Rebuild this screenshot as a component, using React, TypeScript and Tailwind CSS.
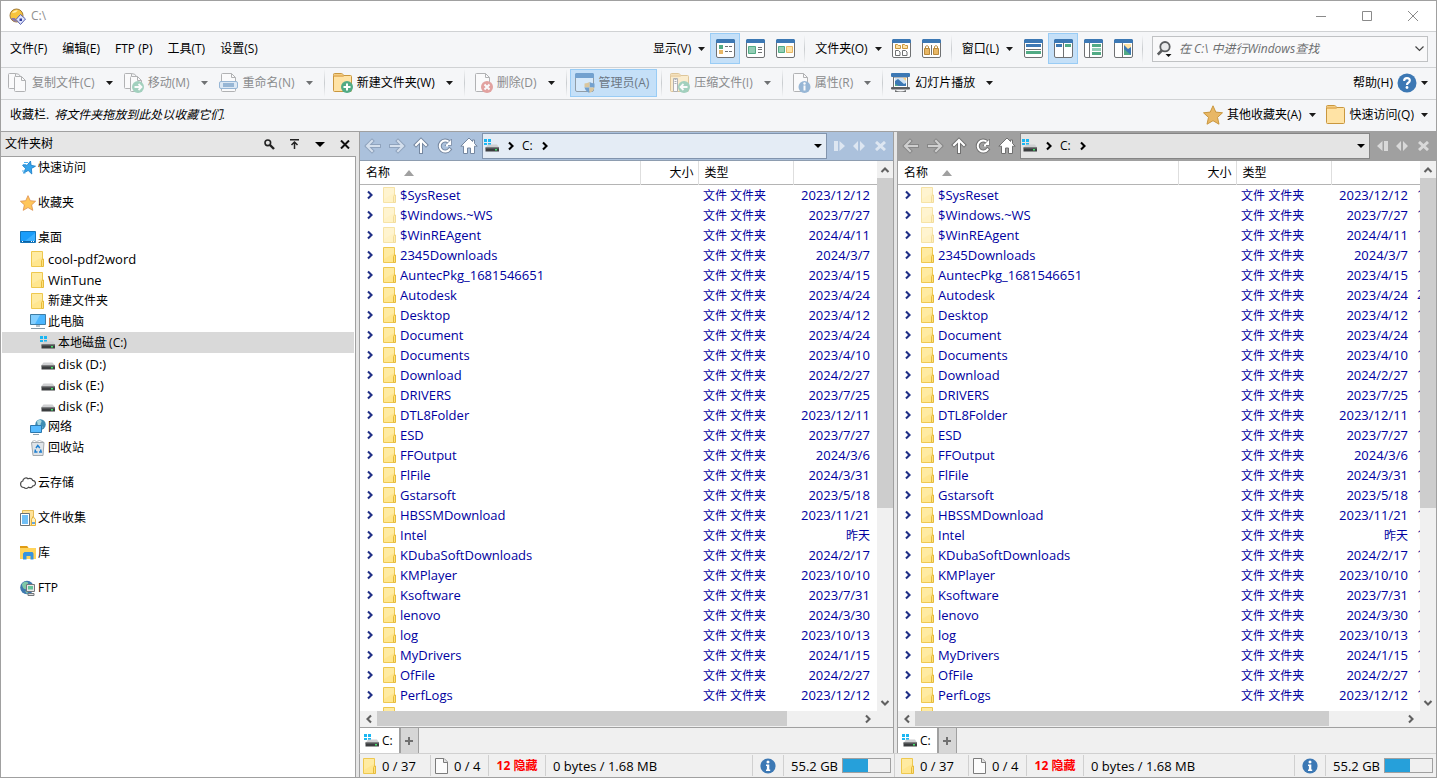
import React from "react";

const GREEN = "#52ab85";
const BLUE = "#3c78b4";
const ORANGE = "#e8b765";

/* ---------- small glyphs ---------- */

function Caret({ faded = false }: { faded?: boolean }) {
  return (
    <svg width="7" height="4" viewBox="0 0 7 4" className={faded ? "text-[#6f7173]" : "text-[#1a1a1a]"}>
      <path d="M0 0h7L3.500 4z" fill="currentColor" />
    </svg>
  );
}

function Chevron({ dir, className }: { dir: "up" | "down" | "left" | "right"; className?: string }) {
  const d = {
    up: "M1.500 7L5 3.500 8.500 7",
    down: "M1.500 3L5 6.500 8.500 3",
    left: "M7 1.500L3.500 5 7 8.500",
    right: "M3 1.500L6.500 5 3 8.500",
  }[dir];
  return (
    <svg width="10" height="10" viewBox="0 0 10 10" className={className}>
      <path d={d} fill="none" stroke="currentColor" strokeWidth="2.100" />
    </svg>
  );
}

/* ---------- tree and list icons ---------- */

function FolderIcon({ faded = false }: { faded?: boolean }) {
  return (
    <svg width="16" height="16" viewBox="0 0 16 16" className={faded ? "opacity-50" : ""}>
      <path d="M1.500.5h11v15h-11z" fill="#ffe68f" stroke="#eec84f" />
      <path d="M2 1h10v5L2 12z" fill="#ffedaa" opacity=".7" />
      <path d="M11.500 15.500v-6l1-1.500h1v7.500z" fill="#ffe17c" stroke="#e6bb3c" />
    </svg>
  );
}

function DriveIcon({ system = false }: { system?: boolean }) {
  return (
    <svg width="16" height="16" viewBox="0 0 16 16">
      {system && <path d="M0 1h3v3H0zM4 1h3v3H4zM0 5h3v2H0zM4 5h3v2H4z" fill="#1bb6f2" />}
      <path d={system ? "M4 6.500h9l2 3H2z" : "M3.500 6.500h9l2.500 3H1z"} fill="#cfd0d2" />
      <path d="M1.500 9.500h13.500v4H1.500z" fill="#3b3d3f" />
      <path d="M1.500 9.500h13.500v1H1.500z" fill="#6b6d6f" />
      <path d="M11 11h2v1.500h-2z" fill="#43e26b" />
    </svg>
  );
}

function StarIcon({ size, fill, stroke }: { size: number; fill: string; stroke: string }) {
  return (
    <svg width={size} height={size} viewBox="0 0 20 20">
      <path d="M10 .8l2.800 6.300 6.700.7-5 4.600 1.500 6.800L10 15.700l-6 3.500 1.500-6.800-5-4.600 6.700-.7z" fill={fill} stroke={stroke} />
    </svg>
  );
}

function QuickAccessIcon() {
  return (
    <svg width="16" height="16" viewBox="0 0 16 16">
      <path d="M10.500 1l.6 4.300 4.400.9-4.100 2.300.4 5.500-3.600-3.500-4.600 2.600 2-4.700-3.100-3 4.700-.2z" fill="#35a4ec" stroke="#1479c4" strokeWidth=".8" />
      <path d="M4 2.500h4M3 4.500h3M2 11h3M3.500 13h2" stroke="#4fb0ee" strokeWidth="1" />
    </svg>
  );
}

function DesktopIcon() {
  return (
    <svg width="16" height="16" viewBox="0 0 16 16">
      <path d="M.5 1.500h15v11H.5z" fill="#1a9dfa" stroke="#1574b8" />
      <path d="M5 11L15 3v8z" fill="#3cb0ff" />
      <path d="M1 11.500h14" stroke="#0c62a4" />
      <path d="M2 11.500h1M11 11.500h1M13 11.500h1" stroke="#fff" />
    </svg>
  );
}

function ComputerIcon() {
  return (
    <svg width="16" height="16" viewBox="0 0 16 16">
      <path d="M.5 .5h15v10H.5z" fill="#4bb6ff" stroke="#3f7da4" />
      <path d="M1 1h9L5 10H1z" fill="#83cfff" />
      <path d="M6 11h4v2H6z" fill="#b5c0c8" />
      <path d="M1 14.500h14" stroke="#8498a5" />
    </svg>
  );
}

function NetworkIcon() {
  return (
    <svg width="16" height="16" viewBox="0 0 16 16">
      <circle cx="10.500" cy="5.500" r="5.200" fill="#3e8db3" />
      <path d="M7 2c2-1.500 4-1 4.500 0s-1 2-1 3.500 2 1 2 2.500-1 2-2 2-3-3-3.500-8z" fill="#a6d6df" />
      <path d="M.5 6.500h11v7H.5z" fill="#56bbff" stroke="#2d78ad" />
      <path d="M3 15.500h6" stroke="#8aa0ae" />
    </svg>
  );
}

function RecycleIcon() {
  return (
    <svg width="16" height="16" viewBox="0 0 16 16">
      <path d="M1.500 2.500h12.500l-1 13h-10z" fill="#dfe4e8" stroke="#a3a9ae" />
      <path d="M2 1.500l2.500-1 2 1 3-1 4 1.500" stroke="#b8bdc1" fill="none" />
      <path d="M6 8l1.800-2.500L9.800 8M5.500 9.500L5 12h2.500M10.500 9.500l.7 2.500H9" fill="none" stroke="#1f7fd0" strokeWidth="1.500" />
    </svg>
  );
}

function CloudIcon() {
  return (
    <svg width="16" height="16" viewBox="0 0 16 16">
      <path d="M4 12.500C1.700 12.500.6 10.700.6 9s1-2.700 2.200-3C3 3.500 6 2 8 3.700c2.500-1 4.300.3 4.600 1.700 1.800.2 2.900 1.500 2.900 2.800 0 1.600-1.200 2.800-2.600 2.700-.6 1.700-2.800 2.300-4.200 1.300-1.200 1.400-3.400 1.400-4.700.3z" fill="#fff" stroke="#4a4a4a" strokeWidth="1.200" />
    </svg>
  );
}

function CollectionIcon() {
  return (
    <svg width="16" height="16" viewBox="0 0 16 16">
      <path d="M2.500.5h11v15h-11z" fill="#ffe39b" stroke="#e5bb55" />
      <path d="M.5 3.500h9v12h-9z" fill="#fff" stroke="#6c7175" />
      <path d="M2 5h6v9H2z" fill="#71bff5" />
      <path d="M11.500 15.500v-6l1.500-3 2.500 3v6z" fill="#fff1bf" stroke="#e5b13a" />
      <path d="M12 12h3v2h-3z" fill="#64a7e0" />
    </svg>
  );
}

function LibraryIcon() {
  return (
    <svg width="16" height="16" viewBox="0 0 16 16">
      <path d="M0 1h7l1.500 2H16v11H0z" fill="#ffd45c" />
      <path d="M0 1h7l1.500 2H0z" fill="#e09c14" />
      <path d="M3 14.500V8.500L4.500 7h8L13.500 8.500v6h-3V11h-4v3.500z" fill="#3693e0" />
    </svg>
  );
}

function FtpIcon() {
  return (
    <svg width="16" height="16" viewBox="0 0 16 16">
      <circle cx="7" cy="7.500" r="6.800" fill="#3f78ae" />
      <path d="M2 4c2-3 5-2.500 6-1.500S7 5 6.500 6 8 8 6 9 2 7 2 4zM5 11l3 1-1 2z" fill="#7fc9a8" />
      <path d="M6.500 4.500h8v7h-8z" fill="#e8e8e8" stroke="#73777a" />
      <path d="M8 6h5v3.500H8z" fill="#65c39a" />
      <path d="M8 13.500h6v2H8z" fill="#e0e0e0" stroke="#73777a" />
    </svg>
  );
}

function PageIcon() {
  return (
    <svg width="13" height="16" viewBox="0 0 13 16">
      <path d="M.5.5h8.500l3.500 3.500v11.500H.5z" fill="#fcfcfc" stroke="#7c7c7c" />
      <path d="M8.500.5V4.500h4" fill="#e4e4e4" stroke="#7c7c7c" />
    </svg>
  );
}

function InfoIcon() {
  return (
    <svg width="16" height="16" viewBox="0 0 16 16">
      <circle cx="8" cy="8" r="7.600" fill={BLUE} />
      <circle cx="8" cy="3.900" r="1.500" fill="#fff" />
      <path d="M6 6.500h3.300v5h.9V13H6v-1.500h.9V8H6z" fill="#fff" />
    </svg>
  );
}

/* ---------- toolbar icons ---------- */

function WindowIcon({ children }: { children: React.ReactNode }) {
  return (
    <svg width="19" height="19" viewBox="0 0 19 19">
      <rect x=".5" y=".5" width="18" height="18" rx="1.500" fill="#fff" stroke="#6f7173" />
      <path d="M0 4V1.500Q0 0 1.500 0h16Q19 0 19 1.500V4z" fill={BLUE} />
      {children}
    </svg>
  );
}

const viewDetails = (
  <WindowIcon>
    <path d="M3 6h4v4H3z" fill={GREEN} />
    <path d="M3 11h4v4H3z" fill={ORANGE} />
    <path d="M9 7.500h3M13 7.500h3M9 12.500h3M13 12.500h3" stroke="#6f7173" />
  </WindowIcon>
);
const viewTiles = (
  <WindowIcon>
    <path d="M2.500 7.500h7v7h-7z" fill="#93cdb5" stroke={GREEN} />
    <path d="M12 8.500h4M12 10.500h4M12 13.500h4" stroke="#6f7173" />
  </WindowIcon>
);
const viewThumbs = (
  <WindowIcon>
    <path d="M2.500 7.500h6v6h-6z" fill="#93cdb5" stroke={GREEN} />
    <path d="M10.500 7.500h6v6h-6z" fill="#ffe3a5" stroke={ORANGE} />
  </WindowIcon>
);
const folderMixed = (
  <WindowIcon>
    <path d="M3.500 5.500h2l1 1h2v3h-5zM10.500 5.500h2l1 1h2v3h-5z" fill="#ffe3a5" stroke="#c9973f" />
    <path d="M3.500 11.500h3l1.500 1.500v3.500H3.500zM10.500 11.500h3l1.500 1.500v3.500h-4.500z" fill="#fff" stroke="#6f7173" />
  </WindowIcon>
);
const folderLocked = (
  <WindowIcon>
    <path d="M9.500 6v10" stroke="#6f7173" />
    <path d="M3.500 10V7.500q1.500-1.800 3 0V10M12.500 10V7.500q1.500-1.800 3 0V10" fill="none" stroke="#b98a3c" />
    <path d="M2.500 9.500h5v6h-5zM11.500 9.500h5v6h-5z" fill={ORANGE} stroke="#b98a3c" />
  </WindowIcon>
);
const winRows = (
  <WindowIcon>
    <path d="M2 5h15v3H2z" fill={BLUE} />
    <path d="M2 10.500h15" stroke="#6f7173" />
    <path d="M2 12h15v3H2z" fill={GREEN} />
  </WindowIcon>
);
const winCols = (
  <WindowIcon>
    <path d="M2 5h6v3H2z" fill={BLUE} />
    <path d="M11 5h6v3h-6z" fill={GREEN} />
    <path d="M9.500 4v14" stroke="#6f7173" />
  </WindowIcon>
);
const winTree = (
  <WindowIcon>
    <path d="M5.500 4v14" stroke="#6f7173" />
    <path d="M8 5h9v3H8zM8 13h9v3H8z" fill={GREEN} />
    <path d="M8 9h9v3H8z" fill="#93cdb5" />
  </WindowIcon>
);
const winPreview = (
  <WindowIcon>
    <path d="M8.500 4v14" stroke="#6f7173" />
    <path d="M10 5h7v11h-7z" fill="#ffe3a5" />
    <path d="M10 6l4 4 3-2v8h-7z" fill={BLUE} />
    <path d="M10 10l7 6h-7z" fill={GREEN} />
  </WindowIcon>
);

function TwoPages() {
  return (
    <>
      <path d="M7.500 3.500V.5h-6q-1 0-1 1v13q0 1 1 1h5" fill="#fff" stroke="#6f7173" />
      <path d="M7.500.5q4 0 5 3" fill="none" stroke="#6f7173" />
      <path d="M6.500 4.500q0-1 1-1h6l4 4v10q0 1-1 1h-9q-1 0-1-1z" fill="#fff" stroke="#6f7173" />
      <path d="M13.500 3.500v4h4" fill="none" stroke="#6f7173" />
    </>
  );
}

const copyIcon = (
  <svg width="20" height="20" viewBox="0 0 20 20" className="opacity-50"><TwoPages /></svg>
);
const moveIcon = (
  <svg width="20" height="20" viewBox="0 0 20 20" className="opacity-50">
    <TwoPages />
    <circle cx="14" cy="14" r="6" fill={GREEN} />
    <path d="M10.500 14H17M14.500 11l3 3-3 3" fill="none" stroke="#fff" strokeWidth="1.800" />
  </svg>
);
const renameIcon = (
  <svg width="20" height="20" viewBox="0 0 20 20" className="opacity-50">
    <path d="M2.500 7V1.500q0-1 1-1h9l4 4v13q0 1-1 1h-12q-1 0-1-1V7z" fill="#fff" stroke="#6f7173" />
    <path d="M12.500.5v4h4" fill="none" stroke="#6f7173" />
    <rect x=".5" y="8.500" width="18" height="7" rx="1.500" fill="#c4dcf2" stroke={BLUE} />
    <path d="M4 10h11v4H4z" fill={BLUE} />
  </svg>
);
const bigFolder = (
  <>
    <path d="M.5 2.500V1.500q0-1 1-1h7q1 0 1.500 1l.5 1h7q1 0 1 1v14q0 1-1 1h-16q-1 0-1-1z" fill="#ffe3a5" stroke="#c9973f" />
    <path d="M1 4V1.500h8.500L11 4z" fill={ORANGE} />
  </>
);
const newFolderIcon = (
  <svg width="20" height="20" viewBox="0 0 20 20">
    {bigFolder}
    <circle cx="14" cy="14" r="6" fill={GREEN} />
    <path d="M14 10.500v7M10.500 14h7" stroke="#fff" strokeWidth="2" />
  </svg>
);
const pageShape = (
  <>
    <path d="M2.500 1.500q0-1 1-1h9l4 4v13q0 1-1 1h-12q-1 0-1-1z" fill="#fff" stroke="#6f7173" />
    <path d="M12.500.5v4h4" fill="none" stroke="#6f7173" />
  </>
);
const deleteIcon = (
  <svg width="20" height="20" viewBox="0 0 20 20" className="opacity-50">
    {pageShape}
    <circle cx="14" cy="14" r="6" fill="#d0504a" />
    <path d="M11.500 11.500l5 5M16.500 11.500l-5 5" stroke="#fff" strokeWidth="2" />
  </svg>
);
const adminIcon = (
  <svg width="20" height="20" viewBox="0 0 20 20" className="opacity-60">
    <rect x=".5" y=".5" width="18" height="18" rx="1.500" fill="#fff" fillOpacity=".5" stroke="#6f7173" />
    <path d="M0 5V1.500Q0 0 1.500 0h16Q19 0 19 1.500V5z" fill={BLUE} />
    <path d="M14.500 9q2 1.300 5 1.500v4h-5z" fill={BLUE} />
    <path d="M14.500 9q-2 1.300-5 1.500v4h5z" fill={ORANGE} />
    <path d="M9.500 14.500h5V20q-4-2-5-5.500z" fill={BLUE} />
    <path d="M14.500 14.500h5q-1 3.500-5 5.500z" fill={ORANGE} />
  </svg>
);
const zipIcon = (
  <svg width="20" height="20" viewBox="0 0 20 20" className="opacity-50">
    {bigFolder}
    <path d="M3.500 5.500h4v13h-4z" fill="#fff" stroke="#6f7173" />
    <path d="M5.500 6v6" stroke="#6f7173" strokeDasharray="1 1" strokeWidth="2" />
    <circle cx="14" cy="14" r="6" fill={GREEN} />
    <path d="M17.500 14H11M13.500 11l-3 3 3 3" fill="none" stroke="#fff" strokeWidth="1.800" />
  </svg>
);
const propsIcon = (
  <svg width="20" height="20" viewBox="0 0 20 20" className="opacity-50">
    {pageShape}
    <circle cx="13.500" cy="14" r="6" fill={BLUE} />
    <circle cx="13.500" cy="10.500" r="1.200" fill="#fff" />
    <path d="M12.500 12.500h2v5h-2z" fill="#fff" />
  </svg>
);
const slideIcon = (
  <svg width="20" height="20" viewBox="0 0 20 20">
    <path d="M2.500 4v10.500h14V4z" fill="#fff" stroke="#6f7173" />
    <path d="M4 5h11v8H4z" fill="#cfe2f3" />
    <path d="M12 5h3v3z" fill="#ffd277" />
    <path d="M4 8l3-2 6 5 2-1v3H4z" fill={BLUE} />
    <path d="M4 11l4 2H4z" fill={GREEN} />
    <rect x="0" y="0" width="19" height="4" rx="1" fill={BLUE} />
    <rect x="0" y="14" width="19" height="2.500" rx="1" fill="#5c5e60" />
    <path d="M4 17q5.500 3 11 0v2H4z" fill="#6f7173" />
  </svg>
);
const helpIcon = (
  <svg width="20" height="20" viewBox="0 0 20 20">
    <circle cx="10" cy="10" r="9.500" fill={BLUE} />
    <path d="M7.200 8Q7 5.200 10 5.200q2.800 0 2.800 2.400 0 1.400-1.500 2.200Q10 10.500 10 12" fill="none" stroke="#fff" strokeWidth="2.200" />
    <circle cx="10" cy="14.500" r="1.400" fill="#fff" />
  </svg>
);
const plainFolderIcon = <svg width="20" height="20" viewBox="0 0 20 20">{bigFolder}</svg>;

/* ---------- toolbar parts ---------- */

function Separator({ className = "" }: { className?: string }) {
  return <span className={`h-7 w-px shrink-0 bg-linear-to-b from-transparent via-[#c9cccf] to-transparent ${className}`} />;
}

function IconButton({ label, active = false, children }: { label: string; active?: boolean; children: React.ReactNode }) {
  return (
    <button
      aria-label={label}
      className={`flex h-[31px] w-[30px] shrink-0 items-center justify-center border ${active ? "border-[#99ccf5] bg-[#c5e0f8]" : "border-transparent"}`}
    >
      {children}
    </button>
  );
}

function ToolItem({ icon, label, disabled, fadedCaret }: { icon: React.ReactNode; label: string; disabled?: boolean; fadedCaret?: boolean }) {
  return (
    <div className="flex shrink-0 items-center">
      <button disabled={disabled} className={`flex items-center gap-1 ${disabled ? "text-[#8a8b8d]" : "text-black"}`}>
        {icon}
        {label}
      </button>
      <button aria-label={label + " ▾"} className="flex h-6 w-[29px] items-center justify-center">
        <Caret faded={fadedCaret} />
      </button>
    </div>
  );
}

function MenuDrop({ label }: { label: string }) {
  return (
    <button className="flex shrink-0 items-center gap-[7px] pr-[5px]">
      {label}
      <Caret />
    </button>
  );
}

/* ---------- folder tree ---------- */

type Node = { label: string; icon: React.ReactNode; level?: 0 | 1 | 2; selected?: boolean };

const tree: Node[][] = [
  [{ label: "快速访问", icon: <QuickAccessIcon /> }],
  [{ label: "收藏夹", icon: <StarIcon size={16} fill="#ffc65b" stroke="#de8f4c" /> }],
  [
    { label: "桌面", icon: <DesktopIcon /> },
    { label: "cool-pdf2word", icon: <FolderIcon />, level: 1 },
    { label: "WinTune", icon: <FolderIcon />, level: 1 },
    { label: "新建文件夹", icon: <FolderIcon />, level: 1 },
    { label: "此电脑", icon: <ComputerIcon />, level: 1 },
    { label: "本地磁盘 (C:)", icon: <DriveIcon system />, level: 2, selected: true },
    { label: "disk (D:)", icon: <DriveIcon />, level: 2 },
    { label: "disk (E:)", icon: <DriveIcon />, level: 2 },
    { label: "disk (F:)", icon: <DriveIcon />, level: 2 },
    { label: "网络", icon: <NetworkIcon />, level: 1 },
    { label: "回收站", icon: <RecycleIcon />, level: 1 },
  ],
  [{ label: "云存储", icon: <CloudIcon /> }],
  [{ label: "文件收集", icon: <CollectionIcon /> }],
  [{ label: "库", icon: <LibraryIcon /> }],
  [{ label: "FTP", icon: <FtpIcon /> }],
];

const indent = ["pl-[18px]", "pl-[28px]", "pl-[38px]"];

function hasHan(text: string) {
  return /[\u4e00-\u9fff]/.test(text);
}

function FolderTree() {
  return (
    <aside className="flex w-[358px] shrink-0 flex-col bg-[#e6e6e6]">
      <header className="flex h-6 shrink-0 items-center pr-[2px] pl-1">
        <h2 className="flex-1">文件夹树</h2>
        <button aria-label="查找" className="flex w-[25px] justify-center">
          <svg width="11" height="11" viewBox="0 0 11 11">
            <circle cx="3.800" cy="3.800" r="2.800" fill="#e4e4e4" stroke="#222" strokeWidth="1.600" />
            <path d="M6 6l4 4" stroke="#222" strokeWidth="2.400" />
          </svg>
        </button>
        <button aria-label="向上" className="flex w-[25px] justify-center">
          <svg width="11" height="10" viewBox="0 0 11 10">
            <path d="M1 .8h9M5.500 10V3.500M2.500 6l3-3 3 3" fill="none" stroke="#222" strokeWidth="1.500" />
          </svg>
        </button>
        <button aria-label="菜单" className="flex w-[25px] justify-center">
          <svg width="10" height="5" viewBox="0 0 10 5"><path d="M0 0h10L5 5z" /></svg>
        </button>
        <button aria-label="关闭" className="flex w-[25px] justify-center">
          <svg width="10" height="9" viewBox="0 0 10 9">
            <path d="M1 .5l8 8M9 .5l-8 8" stroke="#111" strokeWidth="2" />
          </svg>
        </button>
      </header>
      <nav className="mr-[3px] flex flex-1 flex-col gap-[14px] overflow-hidden border-t border-r border-[#a0a0a0] bg-white px-px">
        {tree.map((group, i) => (
          <ul key={i}>
            {group.map((n) => (
              <li key={n.label}>
                <button
                  className={`flex h-[21px] w-full items-center gap-[2px] text-left ${indent[n.level ?? 0]} ${n.selected ? "bg-[#d9d9d9]" : ""}`}
                >
                  {n.icon}
                  <span className={hasHan(n.label) || n.label === "FTP" ? "text-xs" : "text-[13px] leading-4"}>{n.label}</span>
                </button>
              </li>
            ))}
          </ul>
        ))}
      </nav>
    </aside>
  );
}

/* ---------- file panes ---------- */

const files: [string, string, string][] = [
  ["$SysReset", "2023/12/12", "1"],
  ["$Windows.~WS", "2023/7/27", "1"],
  ["$WinREAgent", "2024/4/11", "1"],
  ["2345Downloads", "2024/3/7", "1"],
  ["AuntecPkg_1681546651", "2023/4/15", "1"],
  ["Autodesk", "2023/4/24", "2"],
  ["Desktop", "2023/4/12", "1"],
  ["Document", "2023/4/24", "1"],
  ["Documents", "2023/4/10", "1"],
  ["Download", "2024/2/27", "1"],
  ["DRIVERS", "2023/7/25", "1"],
  ["DTL8Folder", "2023/12/11", "1"],
  ["ESD", "2023/7/27", "1"],
  ["FFOutput", "2024/3/6", "1"],
  ["FlFile", "2024/3/31", "1"],
  ["Gstarsoft", "2023/5/18", "1"],
  ["HBSSMDownload", "2023/11/21", "1"],
  ["Intel", "昨天", "1"],
  ["KDubaSoftDownloads", "2024/2/17", "1"],
  ["KMPlayer", "2023/10/10", "1"],
  ["Ksoftware", "2023/7/31", "1"],
  ["lenovo", "2024/3/30", "1"],
  ["log", "2023/10/13", "1"],
  ["MyDrivers", "2024/1/15", "1"],
  ["OfFile", "2024/2/27", "1"],
  ["PerfLogs", "2023/12/12", "1"],
];

function NavIcon({ children, faded = false, label, edge }: { children: React.ReactNode; faded?: boolean; label: string; edge: string }) {
  return (
    <button aria-label={label} className={`flex w-6 justify-center ${faded ? "opacity-50" : ""} ${edge}`}>
      <svg width="18" height="18" viewBox="0 0 18 18" fill="none">
        {children}
      </svg>
    </button>
  );
}

function Outlined({ d }: { d: string }) {
  return (
    <>
      <path d={d} stroke="currentColor" strokeWidth="4" strokeLinecap="square" />
      <path d={d} stroke="#fff" strokeWidth="2" strokeLinecap="square" />
    </>
  );
}

function FilePane({ active }: { active: boolean }) {
  const edge = active ? "text-[#7587a0]" : "text-[#707070]";
  return (
    <section className={`flex min-w-0 flex-col border-l border-[#a0a0a0] ${active ? "flex-[535] border-r" : "flex-[540]"}`}>
      <div className={`flex h-[29px] shrink-0 border-b pl-px ${active ? "border-[#8e9db0] bg-[#abc1dc]" : "border-[#a0a0a0] bg-[#a0a0a0]"}`}>
        <div className="flex shrink-0 items-center">
          <NavIcon label="后退" faded edge={edge}><Outlined d="M3.500 9H15M8 4L3 9l5 5" /></NavIcon>
          <NavIcon label="前进" faded edge={edge}><Outlined d="M14.500 9H3M10 4l5 5-5 5" /></NavIcon>
          <NavIcon label="向上" edge={edge}><Outlined d="M9 4v11M4 8l5-5 5 5" /></NavIcon>
          <NavIcon label="刷新" edge={edge}>
            <Outlined d="M13.500 12.500A5.500 5.500 0 1 1 13 5" />
            <path d="M15.500 2v6.500H9z" fill="#fff" stroke="currentColor" strokeWidth=".8" />
            <path d="M10 8.500h2" stroke="#fff" strokeWidth="2" />
          </NavIcon>
          <NavIcon label="主页" edge={edge}>
            <path d="M9 1L.8 9.200h2.700V16.500h4V11h3v5.500h4V9.200h2.700L14.500 6.500V3h-2v1.500z" fill="#fff" stroke="currentColor" />
          </NavIcon>
        </div>
        <div className={`my-px ml-px flex min-w-0 flex-1 items-center border pl-px ${active ? "border-[#8194ad] bg-[#e4ecf5]" : "border-[#858585] bg-[#e4e4e4]"}`}>
          <DriveIcon system />
          <span className="flex w-[22px] justify-center"><Chevron dir="right" className="text-black" /></span>
          <button className="w-[18px] text-left">C:</button>
          <Chevron dir="right" className="text-black" />
          <button aria-label="历史" className="ml-auto flex h-full w-4 items-center justify-center">
            <svg width="8" height="4" viewBox="0 0 8 4"><path d="M0 0h8L4 4z" /></svg>
          </button>
        </div>
        <div className="flex w-[66px] shrink-0 items-center pl-[2px] text-white opacity-60">
          <button aria-label="切换" className="flex w-5 justify-center">
            <svg width="11" height="10" viewBox="0 0 11 10" fill="currentColor">
              {active ? <path d="M0 0h4v10H0zM5.500 0L11 5 5.500 10z" /> : <path d="M7 0h4v10H7zM5.500 0L0 5l5.500 5z" />}
            </svg>
          </button>
          <button aria-label="交换" className="flex w-5 justify-center">
            <svg width="12" height="10" viewBox="0 0 12 10" fill="currentColor"><path d="M5 0v10L0 5zM7 0l5 5-5 5z" /></svg>
          </button>
          <button aria-label="关闭" className="flex w-[22px] justify-center">
            <svg width="11" height="10" viewBox="0 0 11 10"><path d="M1 1l9 8M10 1L1 9" stroke="currentColor" strokeWidth="3" /></svg>
          </button>
        </div>
      </div>

      <div className="flex min-h-0 flex-1 bg-white">
        <div className="min-w-0 flex-1 overflow-hidden">
          <table className="w-[620px] table-fixed border-collapse">
            <colgroup>
              <col className="w-[280px]" />
              <col className="w-[58px]" />
              <col className="w-[95px]" />
              <col className="w-[84px]" />
              <col />
            </colgroup>
            <thead>
              <tr className="h-[23px] border-b border-[#b4b4b4]">
                <th className="border-r border-[#dedede] p-0 pt-[2px] pl-[6px] text-left font-normal">
                  <span className="flex items-center gap-[14px]">
                    名称
                    <svg width="10" height="6" viewBox="0 0 10 6"><path d="M0 6h10L5 0z" fill="#a0a0a0" /></svg>
                  </span>
                </th>
                <th className="border-r border-[#dedede] p-0 pt-[2px] pr-1 text-right font-normal">大小</th>
                <th className="border-r border-[#dedede] p-0 pt-[2px] pl-[6px] text-left font-normal">类型</th>
                <th />
                <th />
              </tr>
            </thead>
            <tbody className="text-[#0000a0]">
              {files.map(([name, date, time], i) => (
                <tr key={name} className="h-5">
                  <td className="p-0">
                    <span className="flex h-5 items-center pl-[5px] text-[13px]">
                      <Chevron dir="right" className="mr-[7px] text-[#1f2f86]" />
                      <FolderIcon faded={i < 3} />
                      <span className="ml-[2px]">{name}</span>
                    </span>
                  </td>
                  <td className="p-0" />
                  <td className="p-0 pt-[2px] pl-[5px] whitespace-nowrap">文件 文件夹</td>
                  <td className={`p-0 pr-[7px] text-right ${hasHan(date) ? "pt-[2px]" : "text-[13px]"}`}>{date}</td>
                  <td className="p-0 pl-[2px]">{active ? null : time}</td>
                </tr>
              ))}
              <tr className="h-5">
                <td className="p-0 pl-[22px]"><FolderIcon /></td>
              </tr>
            </tbody>
          </table>
        </div>
        <div className="flex w-4 shrink-0 flex-col items-center bg-[#f0f0f0] text-[#606060]">
          <button aria-label="向上滚动" className="flex h-[17px] items-center"><Chevron dir="up" /></button>
          <div className="w-full flex-1"><div className="h-[64%] bg-[#cdcdcd]" /></div>
          <button aria-label="向下滚动" className="flex h-[17px] items-center"><Chevron dir="down" /></button>
        </div>
      </div>

      <div className="flex h-4 shrink-0 items-center bg-[#f0f0f0] text-[#606060]">
        <button aria-label="向左滚动" className="flex w-[17px] justify-center"><Chevron dir="left" /></button>
        <div className="h-4 flex-1"><div className="h-[15px] w-[85%] bg-[#cdcdcd]" /></div>
        <button aria-label="向右滚动" className="mr-[17px] flex w-[17px] justify-center"><Chevron dir="right" /></button>
      </div>

      <div className="flex h-[26px] shrink-0 border-t border-[#a0a0a0] bg-[#f0f0f0]">
        <button className="flex items-center gap-[2px] border-r-2 border-[#a0a0a0] bg-white pr-[6px] pl-1">
          <DriveIcon system />
          C:
        </button>
        <button aria-label="新建标签" className="flex w-[18px] items-center justify-center border-r border-[#a0a0a0] bg-[#d6d6d6]">
          <svg width="8" height="8" viewBox="0 0 8 8"><path d="M4 0v8M0 4h8" stroke="#707070" strokeWidth="2" /></svg>
        </button>
      </div>
    </section>
  );
}

function PaneStatus({ flex }: { flex: string }) {
  const cell = "flex items-center border-r border-[#d0d0d0] whitespace-nowrap";
  return (
    <div className={`flex min-w-0 py-px text-[13px] ${flex}`}>
      <span className={`${cell} w-[69px] gap-1`}><FolderIcon />0 / 37</span>
      <span className={`${cell} w-[58px] gap-[6px] pl-1`}><PageIcon />0 / 4</span>
      <span className={`${cell} w-[57px] justify-center text-xs font-bold text-[#ff0000]`}>12 隐藏</span>
      <span className={`${cell} flex-1 pl-[7px]`}>0 bytes / 1.68 MB</span>
      <span className={`${cell} w-[31px] justify-center`}><InfoIcon /></span>
      <span className="flex items-center gap-1 pr-[3px] pl-[7px] whitespace-nowrap">
        55.2 GB
        <span className="flex h-[15px] w-[49px] border border-[#a0a0a0] bg-[#f0f0f0]"><span className="w-[53%] bg-[#26a0da]" /></span>
      </span>
    </div>
  );
}

/* ---------- page ---------- */

export default function App() {
  return (
    <div className="flex h-screen flex-col overflow-hidden border border-[#a0a0a0] bg-[#f5f6f8] font-['Open_Sans','Noto_Sans_CJK_SC',sans-serif] text-xs leading-4 text-black">
      <header className="flex h-[31px] shrink-0 items-center border-b border-[#d0d2d4] bg-white pl-2">
        <svg width="17" height="17" viewBox="0 0 17 17">
          <circle cx="7.500" cy="7.500" r="6.500" fill="#f7c43c" stroke="#a27c3b" />
          <path d="M3 5q2-3.500 6-2.500Q7 5 3 5z" fill="#fff0b0" />
          <path d="M2 10q2 4 6 4l-2-4z" fill="#8a78a8" />
          <path d="M11.500 6.500L16.500 11l-5 5.500L7 11.500z" fill="#dfe3fb" stroke="#5660b0" />
          <path d="M10.500 10.500h2.500v2.500h-2.500z" fill="#303c9c" />
        </svg>
        <h1 className="ml-[5px] flex-1 text-[#909090]">C:\</h1>
        <div className="flex h-full text-[#8a8a8a]">
          {["M0 5.500h10", "M.5.5h9v9h-9z", "M0 0l10 10M10 0L0 10"].map((d, i) => (
            <button key={d} aria-label={["最小化", "最大化", "关闭"][i]} className="flex w-[46px] items-center justify-center">
              <svg width="10" height="10" viewBox="0 0 10 10"><path d={d} fill="none" stroke="currentColor" /></svg>
            </button>
          ))}
        </div>
      </header>

      <div className="flex h-9 shrink-0 items-center border-b border-[#d0d2d4] pr-2 pb-[2px] pl-[9px]">
        <nav className="flex shrink-0 gap-[15px]">
          {["文件(F)", "编辑(E)", "FTP (P)", "工具(T)", "设置(S)"].map((m) => (
            <button key={m}>{m}</button>
          ))}
        </nav>
        <div className="ml-auto flex items-center">
          <MenuDrop label="显示(V)" />
          <IconButton label="详细" active>{viewDetails}</IconButton>
          <IconButton label="平铺">{viewTiles}</IconButton>
          <IconButton label="缩略图">{viewThumbs}</IconButton>
          <Separator className="mr-[10px] ml-1" />
          <MenuDrop label="文件夹(O)" />
          <IconButton label="混合">{folderMixed}</IconButton>
          <IconButton label="锁定">{folderLocked}</IconButton>
          <Separator className="mr-[10px] ml-1" />
          <MenuDrop label="窗口(L)" />
          <IconButton label="水平">{winRows}</IconButton>
          <IconButton label="垂直" active>{winCols}</IconButton>
          <IconButton label="树">{winTree}</IconButton>
          <IconButton label="预览">{winPreview}</IconButton>
          <Separator className="mr-[9px] ml-1" />
          <div className="flex h-[26px] w-[276px] items-center border border-[#c0c2c4] bg-[#f9f9fa]">
            <button aria-label="搜索选项" className="ml-1 flex">
              <svg width="16" height="16" viewBox="0 0 16 16">
                <circle cx="8" cy="5.700" r="4.700" fill="#e9eaeb" stroke="#5c5e60" strokeWidth="1.800" />
                <path d="M4.800 9.500L.8 13.500" stroke="#5c5e60" strokeWidth="2.600" />
                <path d="M8.500 13h6l-3 3z" fill="#111" />
              </svg>
            </button>
            <input
              aria-label="搜索"
              placeholder="在 C:\ 中进行Windows查找"
              className="ml-[6px] min-w-0 flex-1 bg-transparent italic outline-none placeholder:text-[#6c6e70]"
            />
            <button aria-label="搜索历史" className="mr-[3px] flex">
              <svg width="9" height="6" viewBox="0 0 9 6"><path d="M.5.5l4 4 4-4" fill="none" stroke="#444" strokeWidth="1.200" /></svg>
            </button>
          </div>
        </div>
      </div>

      <div className="flex h-8 shrink-0 items-center border-b border-[#d0d2d4] pb-[2px] pl-[7px]">
        <ToolItem icon={copyIcon} label="复制文件(C)" disabled />
        <ToolItem icon={moveIcon} label="移动(M)" disabled fadedCaret />
        <ToolItem icon={renameIcon} label="重命名(N)" disabled fadedCaret />
        <Separator className="mr-2" />
        <ToolItem icon={newFolderIcon} label="新建文件夹(W)" />
        <Separator className="mr-2" />
        <ToolItem icon={deleteIcon} label="删除(D)" disabled />
        <Separator className="mr-[3px]" />
        <button className="flex h-7 shrink-0 items-center gap-1 border border-[#99ccf5] bg-[#c5e0f8] pr-[7px] pl-1 text-[#6c7784]">
          {adminIcon}
          管理员(A)
        </button>
        <Separator className="mr-2 ml-1" />
        <ToolItem icon={zipIcon} label="压缩文件(I)" disabled fadedCaret />
        <Separator className="mr-2" />
        <ToolItem icon={propsIcon} label="属性(R)" disabled fadedCaret />
        <Separator className="mr-2" />
        <ToolItem icon={slideIcon} label="幻灯片播放" />
        <button className="ml-auto flex shrink-0 items-center pr-2">
          帮助(H)
          <span className="mr-1 ml-1">{helpIcon}</span>
          <Caret />
        </button>
      </div>

      <div className="flex h-8 shrink-0 items-center border-b border-[#a0a0a0] pr-2 pb-[2px] pl-[9px]">
        <span>收藏栏.</span>
        <em className="ml-[5px]">将文件夹拖放到此处以收藏它们.</em>
        <button className="ml-auto flex items-center gap-1">
          <StarIcon size={20} fill={ORANGE} stroke="#c9973f" />
          其他收藏夹(A)
          <span className="ml-[3px]"><Caret /></span>
        </button>
        <button className="ml-[10px] flex items-center gap-1">
          {plainFolderIcon}
          快速访问(Q)
          <span className="ml-[3px]"><Caret /></span>
        </button>
      </div>

      <main className="flex min-h-0 flex-1">
        <FolderTree />
        <div className="flex min-w-0 flex-1 flex-col">
          <div className="flex min-h-0 flex-1 gap-[3px] bg-[#e6e6e6]">
            <FilePane active />
            <FilePane active={false} />
          </div>
          <footer className="flex h-6 shrink-0 gap-[5px] border-t border-[#d0d0d0] border-l border-l-[#a0a0a0] bg-[#f0f0f0] pl-[2px]">
            <PaneStatus flex="flex-[533] border-r border-[#d0d0d0]" />
            <PaneStatus flex="flex-[537]" />
          </footer>
        </div>
      </main>
    </div>
  );
}
